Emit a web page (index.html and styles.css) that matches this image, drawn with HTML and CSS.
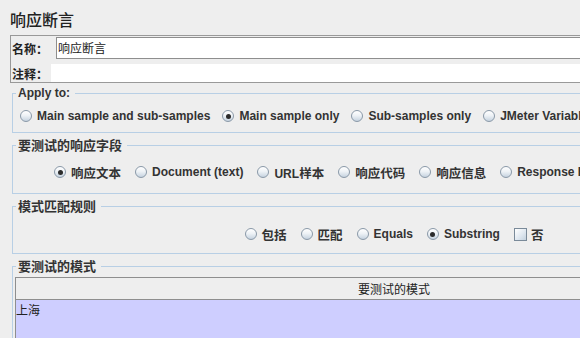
FILE: index.html
```html
<!DOCTYPE html>
<html lang="zh">
<head>
<meta charset="utf-8">
<title>响应断言</title>
<link rel="stylesheet" href="styles.css">
</head>
<body>
<div class="page">
  <h1 class="title">响应断言</h1>

  <div class="namepanel">
    <div class="row name-row">
      <span class="lbl lbl-name">名称：</span>
      <div class="field">响应断言</div>
    </div>
    <div class="row comment-row">
      <span class="lbl lbl-comment">注释：</span>
      <div class="field field-plain"></div>
    </div>
  </div>

  <fieldset class="group g-apply">
    <legend>Apply to:</legend>
    <div class="options">
      <span class="opt"><span class="radio"></span><span>Main sample and sub-samples</span></span>
      <span class="opt"><span class="radio on"></span><span>Main sample only</span></span>
      <span class="opt"><span class="radio"></span><span>Sub-samples only</span></span>
      <span class="opt"><span class="radio"></span><span>JMeter Variable</span></span>
    </div>
  </fieldset>

  <fieldset class="group g-field">
    <legend class="cjl">要测试的响应字段</legend>
    <div class="options centered">
      <span class="opt"><span class="radio on"></span><span class="cj">响应文本</span></span>
      <span class="opt"><span class="radio"></span><span>Document (text)</span></span>
      <span class="opt"><span class="radio"></span><span>URL<span class="cj">样本</span></span></span>
      <span class="opt"><span class="radio"></span><span class="cj">响应代码</span></span>
      <span class="opt"><span class="radio"></span><span class="cj">响应信息</span></span>
      <span class="opt"><span class="radio"></span><span>Response Headers</span></span>
      <span class="opt"><span class="check"></span><span>Ignore Status</span></span>
    </div>
  </fieldset>

  <fieldset class="group g-rule">
    <legend class="cjl">模式匹配规则</legend>
    <div class="options centered">
      <span class="opt"><span class="radio"></span><span class="cj">包括</span></span>
      <span class="opt"><span class="radio"></span><span class="cj">匹配</span></span>
      <span class="opt"><span class="radio"></span><span>Equals</span></span>
      <span class="opt"><span class="radio on"></span><span>Substring</span></span>
      <span class="opt opt-check"><span class="check"></span><span class="cj">否</span></span>
    </div>
  </fieldset>

  <fieldset class="group g-patterns">
    <legend class="cjl">要测试的模式</legend>
    <div class="table">
      <div class="thead">要测试的模式</div>
      <div class="tbody">
        <div class="trow">上海</div>
      </div>
    </div>
  </fieldset>
</div>
</body>
</html>
```

FILE: styles.css
```css
html, body {
  margin: 0;
  padding: 0;
  background: #eeeeee;
  overflow: hidden;
}

.page {
  width: 790px;
  height: 338px;
  color: #333333;
  font-family: "Liberation Sans", "Noto Sans CJK SC", sans-serif;
  font-size: 12px;
}

.title {
  margin: 0;
  padding: 11px 0 8px 10px;
  height: 16px;
  font-family: "Noto Sans CJK SC", sans-serif;
  font-size: 16px;
  line-height: 16px;
  font-weight: 500;
  color: #222222;
}

/* name / comment panel */
.namepanel {
  margin-left: 10px;
  border: 1px solid #999999;
  border-right: none;
  padding: 1px 0 0 1px;
}

.row {
  display: flex;
  align-items: center;
}

.lbl {
  font-family: "Noto Sans CJK SC", sans-serif;
  font-weight: 700;
  font-size: 12px;
  color: #222222;
}

.lbl-name { width: 44px; }
.lbl-comment { width: 39px; }

.name-row { height: 22px; }

.field {
  flex: 1;
  box-sizing: border-box;
  height: 22px;
  background: #ffffff;
  border: 1px solid #8e8e8e;
  border-right: none;
  padding-left: 1px;
  font-family: "Noto Sans CJK SC", sans-serif;
  font-size: 12px;
  line-height: 20px;
  color: #222222;
}

.comment-row {
  margin-top: 5px;
  height: 18px;
}

.field-plain {
  height: 18px;
  border: none;
}

/* titled groups */
.group {
  margin: 0 0 0 12px;
  padding: 0;
  width: 764px;
  box-sizing: border-box;
  min-width: 0;
  border: 1px solid #b8cfe5;
}

.group legend {
  margin-left: 3px;
  padding: 0 5px 0 2px;
  font-weight: 700;
  font-size: 12px;
  line-height: 14px;
  color: #333333;
}

.group legend.cjl {
  font-family: "Noto Sans CJK SC", sans-serif;
  font-size: 13px;
}

.g-apply { margin-top: 3px; }
.g-field, .g-rule, .g-patterns { margin-top: 5px; }

.options {
  display: flex;
  align-items: center;
  gap: 14px;
  height: 20px;
  font-weight: 700;
  white-space: nowrap;
}

.g-apply .options { padding: 6px 0 6px 7px; gap: 12px; }
.g-field .options { padding: 10px 0 11px 0; }
.g-rule .options { padding: 11px 0 9px 0; }

.centered { justify-content: center; }

.opt {
  display: inline-flex;
  align-items: center;
  gap: 5px;
}

.cj {
  font-family: "Noto Sans CJK SC", sans-serif;
  font-size: 12.5px;
}

.radio {
  width: 10px;
  height: 10px;
  border: 1px solid #8a99a8;
  border-radius: 50%;
  background: linear-gradient(#ffffff 0%, #eef2f6 45%, #c6d3e0 100%);
  display: inline-flex;
  align-items: center;
  justify-content: center;
  flex: none;
}

.radio.on::after {
  content: "";
  width: 5px;
  height: 5px;
  border-radius: 50%;
  background: #2b2b2b;
}

.check {
  width: 11px;
  height: 11px;
  border: 1px solid #7a8a99;
  background: linear-gradient(135deg, #ffffff 0%, #dde6ef 60%, #c3d1de 100%);
  flex: none;
}

.opt-check { gap: 4px; }

/* table */
.table {
  margin: 4px 0 0 2px;
  width: 756px;
  border-left: 1px solid #8e8e8e;
}

.thead {
  box-sizing: border-box;
  height: 23px;
  border-top: 1px solid #8e8e8e;
  border-bottom: 1px solid #8e8e8e;
  background: #eeeeee;
  text-align: center;
  font-family: "Noto Sans CJK SC", sans-serif;
  font-size: 12px;
  line-height: 21px;
  color: #222222;
}

.tbody {
  height: 80px;
  background: #ceceff;
}

.trow {
  padding-top: 2px;
  height: 16px;
  font-family: "Noto Sans CJK SC", sans-serif;
  font-size: 12px;
  line-height: 16px;
  color: #222222;
}
```
